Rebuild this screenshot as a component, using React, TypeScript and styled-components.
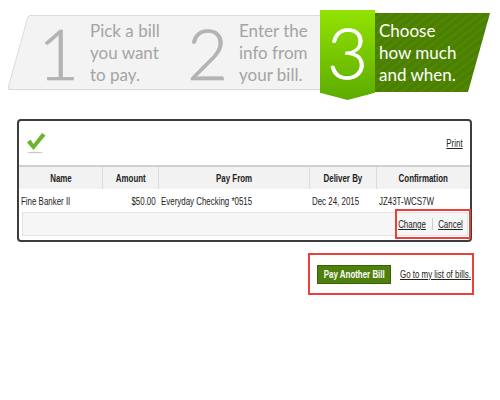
import React from 'react';
import styled, { createGlobalStyle } from 'styled-components';

const GlobalStyle = createGlobalStyle`
  body {
    margin: 0;
    background: #fff;
    font-family: "Liberation Sans", Arial, sans-serif;
    color: #222;
  }
`;

const Page = styled.div`
  width: 500px;
  height: 400px;
  overflow: hidden;
`;

// the table text in the shot is a narrow face; squeeze Liberation Sans to match
const Narrow = styled.span<{ origin?: string }>`
  display: inline-block;
  white-space: nowrap;
  text-decoration: inherit;
  transform: scaleX(0.72);
  transform-origin: ${props => props.origin || 'left'} center;
`;

// step banner
const Banner = styled.div`
  display: flex;
  align-items: flex-start;
  padding-top: 10px;
  height: 90px;
`;

const GrayPanel = styled.div`
  position: relative;
  z-index: 0;
  margin: 5px 0 0 7px;
  width: 313px;
  height: 75px;
  box-sizing: border-box;
  padding-left: 31px;
  display: flex;
  align-items: center;

  &::before {
    content: '';
    position: absolute;
    top: 0;
    bottom: 0;
    left: 0;
    right: -40px;
    z-index: -1;
    background: #f3f3f3;
    border: 1px solid #dadada;
    border-radius: 3px;
    transform: skewX(-15.6deg);
    transform-origin: bottom left;
  }
`;

const Step = styled.div<{ width: number }>`
  display: flex;
  align-items: center;
  width: ${props => props.width}px;
`;

const StepNum = styled.div<{ light?: boolean }>`
  font-family: Lato, "Open Sans", sans-serif;
  font-weight: 300;
  font-size: 71px;
  line-height: 72px;
  width: 52px;
  color: ${props => (props.light ? '#fff' : '#b3b3b3')};
  -webkit-text-stroke: 0.7px ${props => (props.light ? '#fff' : '#b3b3b3')};
`;

const StepText = styled.div<{ light?: boolean }>`
  font-family: Lato, "Open Sans", sans-serif;
  font-size: 17px;
  line-height: 22px;
  color: ${props => (props.light ? '#fff' : '#a4a4a4')};
`;

const GreenBox = styled.div`
  position: relative;
  z-index: 2;
  width: 55px;
  height: 90px;
  padding-bottom: 6px;
  box-sizing: border-box;
  display: flex;
  align-items: center;
  justify-content: center;
  background: linear-gradient(#92e302, #5cab00);
  clip-path: polygon(0 0, 100% 0, 100% 92%, 50% 100%, 0 92%);

  & > div {
    width: auto;
  }
`;

const DarkPanel = styled.div`
  position: relative;
  z-index: 1;
  margin-top: 3px;
  width: 93px;
  height: 79px;
  box-sizing: border-box;
  padding-left: 4px;
  display: flex;
  align-items: center;

  &::before {
    content: '';
    position: absolute;
    top: 0;
    bottom: 0;
    left: -40px;
    right: 0;
    z-index: -1;
    background: repeating-linear-gradient(
      -45deg,
      #4a7f00 0px,
      #4a7f00 4px,
      #508604 4px,
      #508604 7px
    );
    transform: skewX(-15.6deg);
    transform-origin: bottom left;
  }
`;

// confirmation card
const Card = styled.div`
  margin: 19px 0 0 17px;
  width: 455px;
  height: 123px;
  box-sizing: border-box;
  border: 2px solid #3d3d3d;
  border-radius: 4px;
`;

const TopRow = styled.div`
  height: 44px;
  display: flex;
  align-items: center;
  justify-content: space-between;
  padding: 0 7px;
`;

const Link = styled.a`
  font-size: 11px;
  color: #222;
  text-decoration: underline;
  cursor: pointer;
`;

const Table = styled.table`
  width: 100%;
  table-layout: fixed;
  border-collapse: collapse;
  font-size: 11px;
`;

const Th = styled.th<{ w?: number }>`
  height: 22px;
  padding: 0;
  width: ${props => (props.w ? `${props.w}px` : 'auto')};
  background: #f2f2f2;
  border-top: 2px solid #d0d0d0;
  border-left: 1px solid #dcdcdc;
  font-weight: bold;
  text-align: center;
  white-space: nowrap;

  &:first-child {
    border-left: none;
  }
`;

const Td = styled.td<{ right?: boolean }>`
  height: 23px;
  padding: 0 3px 0 2px;
  text-align: ${props => (props.right ? 'right' : 'left')};
  white-space: nowrap;
`;

const ActionBar = styled.div`
  margin: 0 2px 0 3px;
  height: 24px;
  box-sizing: border-box;
  background: #f6f6f6;
  border: 1px solid #e2e2e2;
  display: flex;
  align-items: center;
  justify-content: flex-end;
`;

const RedFrame = styled.div`
  display: flex;
  align-items: center;
  box-sizing: border-box;
  border: 2px solid #e8403d;
`;

const ActionFrame = styled(RedFrame)`
  width: 76px;
  height: 30px;
  margin-right: -4px;
  padding-right: 6px;
  justify-content: flex-end;
`;

const ActionGroup = styled(Narrow)`
  display: inline-flex;
  align-items: center;
  gap: 8px;
`;

const Divider = styled.span`
  width: 1px;
  height: 12px;
  background: #bbb;
`;

const Footer = styled.div`
  margin-top: 11px;
  padding-right: 26px;
  display: flex;
  justify-content: flex-end;
`;

const FooterFrame = styled(RedFrame)`
  width: 166px;
  height: 42px;
  padding-left: 7px;
  gap: 9px;
`;

const Button = styled.button`
  flex-shrink: 0;
  height: 19px;
  width: 74px;
  padding: 0;
  background: #4f7f0c;
  border: 1px solid #3a6008;
  color: #fff;
  font-family: inherit;
  font-size: 11px;
  font-weight: bold;
  white-space: nowrap;
  overflow: visible;
  display: flex;
  align-items: center;
  justify-content: center;
  cursor: pointer;
`;

const Check = () => (
  <svg width="20" height="22" viewBox="0 0 20 22">
    <path d="M1 10.5 L4.5 7.5 L7.5 12 L16 1 L19.5 3.5 L7.5 18 Z" fill="#6db52c" />
    <ellipse cx="9" cy="20.5" rx="8" ry="0.8" fill="#c9c9c9" />
  </svg>
);

export default function App() {
  return (
    <Page>
      <GlobalStyle />
      <Banner>
        <GrayPanel>
          <Step width={149}>
            <StepNum>1</StepNum>
            <StepText>
              Pick a bill
              <br />
              you want
              <br />
              to pay.
            </StepText>
          </Step>
          <Step width={130}>
            <StepNum>2</StepNum>
            <StepText>
              Enter the
              <br />
              info from
              <br />
              your bill.
            </StepText>
          </Step>
        </GrayPanel>
        <GreenBox>
          <StepNum light>3</StepNum>
        </GreenBox>
        <DarkPanel>
          <StepText light>
            Choose
            <br />
            how much
            <br />
            and when.
          </StepText>
        </DarkPanel>
      </Banner>

      <Card>
        <TopRow>
          <Check />
          <Link>
            <Narrow origin="right">Print</Narrow>
          </Link>
        </TopRow>
        <Table>
          <thead>
            <tr>
              <Th w={83}><Narrow origin="center">Name</Narrow></Th>
              <Th w={55}><Narrow origin="center">Amount</Narrow></Th>
              <Th w={150}><Narrow origin="center">Pay From</Narrow></Th>
              <Th w={66}><Narrow origin="center">Deliver By</Narrow></Th>
              <Th><Narrow origin="center">Confirmation</Narrow></Th>
            </tr>
          </thead>
          <tbody>
            <tr>
              <Td><Narrow>Fine Banker II</Narrow></Td>
              <Td right><Narrow origin="right">$50.00</Narrow></Td>
              <Td><Narrow>Everyday Checking *0515</Narrow></Td>
              <Td><Narrow>Dec 24, 2015</Narrow></Td>
              <Td><Narrow>JZ43T-WCS7W</Narrow></Td>
            </tr>
          </tbody>
        </Table>
        <ActionBar>
          <ActionFrame>
            <ActionGroup origin="right">
              <Link>Change</Link>
              <Divider />
              <Link>Cancel</Link>
            </ActionGroup>
          </ActionFrame>
        </ActionBar>
      </Card>

      <Footer>
        <FooterFrame>
          <Button>
            <Narrow origin="center">Pay Another Bill</Narrow>
          </Button>
          <Link>
            <Narrow>Go to my list of bills.</Narrow>
          </Link>
        </FooterFrame>
      </Footer>
    </Page>
  );
}
